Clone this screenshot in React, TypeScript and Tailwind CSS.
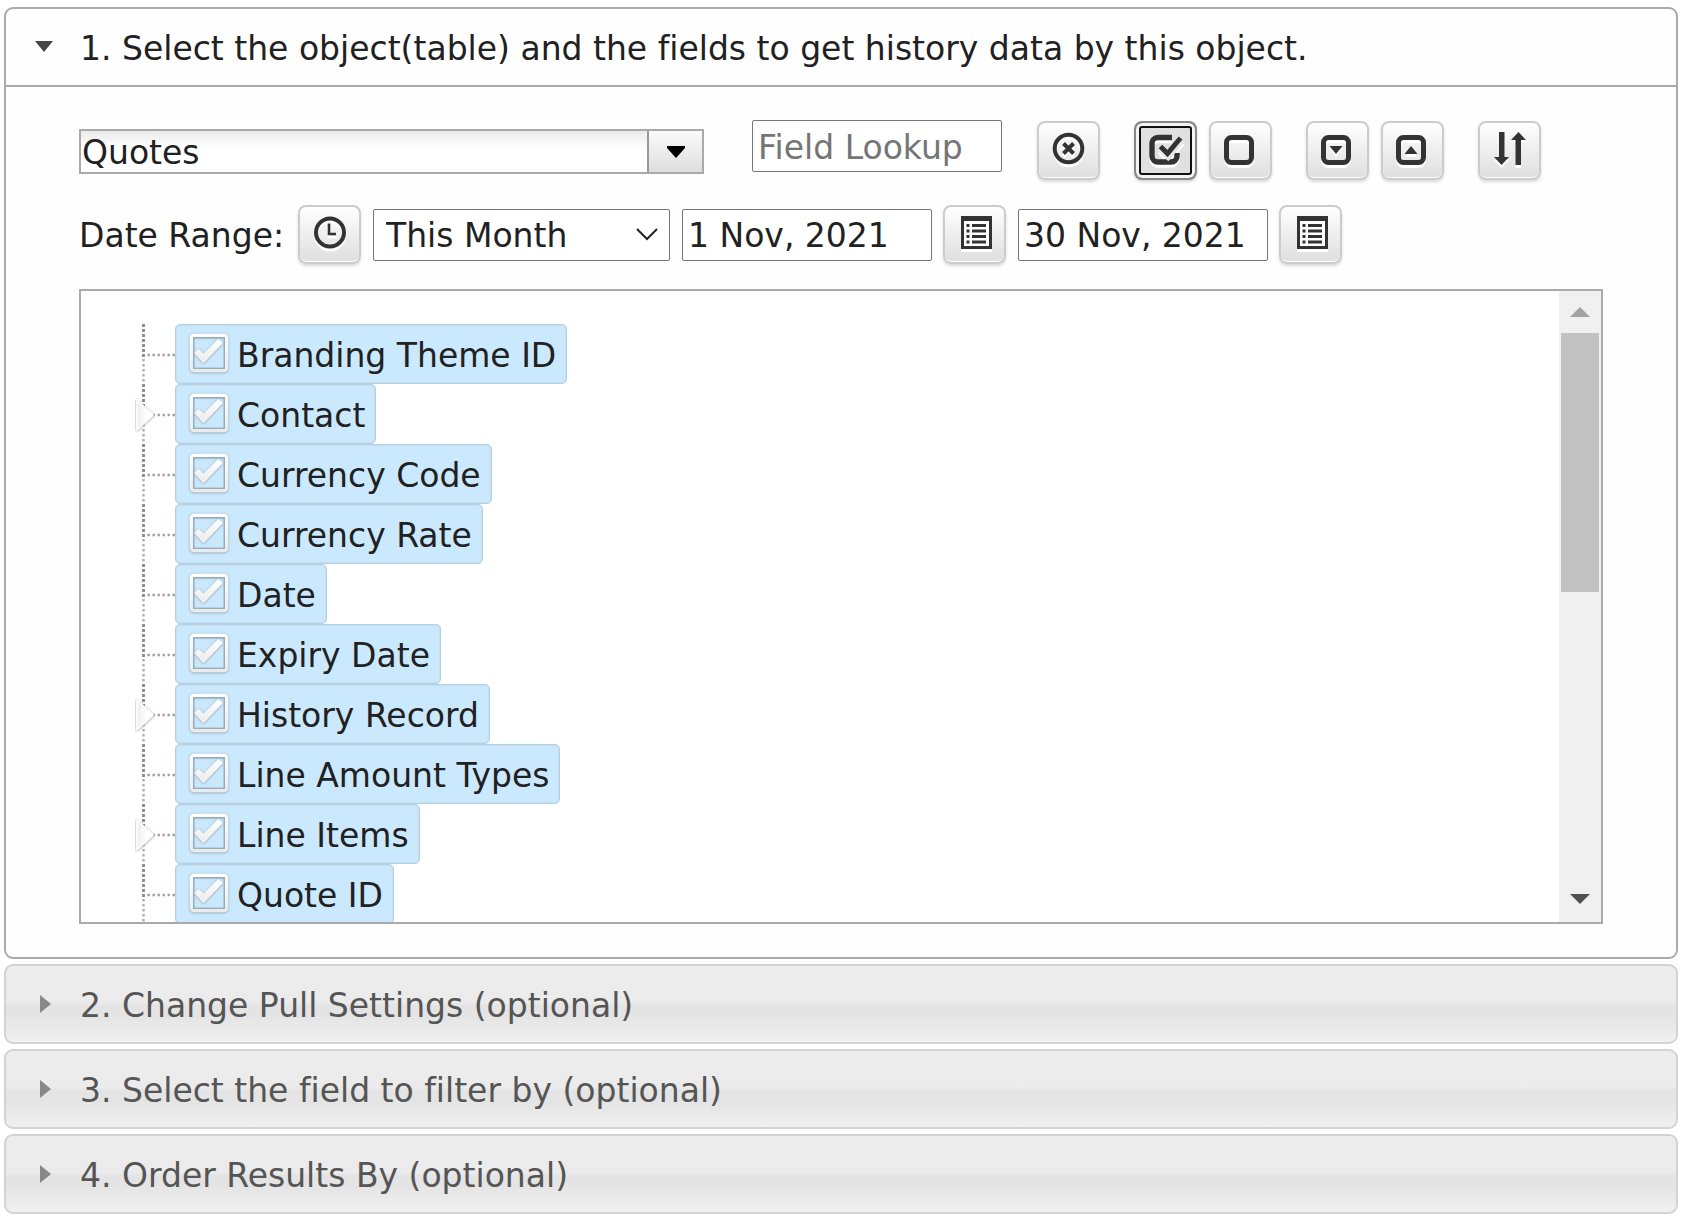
import React, { useState } from "react";

const fields = [
  { name: "Branding Theme ID", expandable: false },
  { name: "Contact", expandable: true },
  { name: "Currency Code", expandable: false },
  { name: "Currency Rate", expandable: false },
  { name: "Date", expandable: false },
  { name: "Expiry Date", expandable: false },
  { name: "History Record", expandable: true },
  { name: "Line Amount Types", expandable: false },
  { name: "Line Items", expandable: true },
  { name: "Quote ID", expandable: false },
];

const sections = [
  "2. Change Pull Settings (optional)",
  "3. Select the field to filter by (optional)",
  "4. Order Results By (optional)",
];

function IconButton({
  label,
  pressed = false,
  children,
}: {
  label: string;
  pressed?: boolean;
  children: React.ReactNode;
}) {
  return (
    <button
      type="button"
      aria-label={label}
      className={
        pressed
          ? "h-[59px] w-[63px] shrink-0 rounded-lg border-2 border-[#888] bg-[#e0e0e0] shadow-[inset_0_0_0_3px_#f4f4f4,inset_0_0_0_5px_#101010,0_2px_3px_rgba(0,0,0,0.15)]"
          : "h-[59px] w-[63px] shrink-0 rounded-lg border-2 border-[#ccc] bg-linear-to-b from-white to-[#dedede] shadow-[inset_0_-1px_0_#fff,0_2px_3px_rgba(0,0,0,0.15)]"
      }
    >
      <svg
        viewBox="2 2 59 55"
        className="block h-[55px] w-[59px] [filter:drop-shadow(0_3px_0_#fff)]"
        fill="none"
        stroke="#333"
        aria-hidden="true"
      >
        {children}
      </svg>
    </button>
  );
}

function CalendarIcon() {
  return (
    <>
      <path d="M18 11h31v33H18z" fill="#333" stroke="none" />
      <path d="M21 16h25v25H21z" fill="#fff" stroke="none" />
      <path d="M29 20.5h14M29 26h14M29 31.5h14M29 37h14" strokeWidth="2.8" />
      <path d="M23.5 20.5h3M23.5 26h3M23.5 31.5h3M23.5 37h3" strokeWidth="2.8" />
    </>
  );
}

function Rail({ expandable }: { expandable: boolean }) {
  return (
    <svg viewBox="0 0 40 60" className="h-[60px] w-10 shrink-0" fill="none" aria-hidden="true">
      <path d="M8.500 0v60" stroke="#b0b0b0" strokeWidth="2.4" strokeDasharray="2.4 2.6" />
      <path d="M8.500 0v34" stroke="#8c8c8c" strokeWidth="2.8" strokeDasharray="3 2" />
      <path d="M12.5 31H40" stroke="#a0a0a0" strokeWidth="2.4" strokeDasharray="2.4 2.6" />
      {expandable && (
        <path
          d="M2 16.500L18 31L2 45.500Z"
          fill="url(#expander)"
          stroke="#fafafa"
          strokeWidth="2"
          strokeLinejoin="round"
          filter="url(#halo)"
        />
      )}
    </svg>
  );
}

function FieldRow({ name, expandable }: { name: string; expandable: boolean }) {
  const [checked, setChecked] = useState(true);
  return (
    <li className="flex">
      <Rail expandable={expandable} />
      <label className="flex h-[60px] items-center gap-2 rounded-[5px] border border-[#b9cedc] bg-[#cbe9fe] pr-[10px] pl-[13px] whitespace-nowrap shadow-[inset_0_0_2px_#b4cfe0]">
        <span className="grid">
          <input
            type="checkbox"
            checked={checked}
            onChange={() => setChecked(!checked)}
            className="size-10 appearance-none [grid-area:1/1]"
          />
          <svg
            viewBox="0 0 40 40"
            className="pointer-events-none size-10 overflow-visible [grid-area:1/1]"
            fill="none"
            aria-hidden="true"
          >
            <rect x="2.500" y="1.500" width="35" height="35" rx="2.500" stroke="url(#boxEdge)" strokeWidth="3.400" filter="url(#halo)" />
            <rect x="4.700" y="3.700" width="30.600" height="30.600" stroke="#8fa9ba" strokeWidth="1.200" />
            {checked && (
              <path
                d="M5.500 19L9.500 15L14.500 20L29.500 5L33.500 9L14.500 29Z"
                fill="url(#boxEdge)"
                stroke="#fff"
                strokeWidth="0.500"
                filter="url(#halo)"
              />
            )}
          </svg>
        </span>
        <span className="pt-[3px]">{name}</span>
      </label>
    </li>
  );
}

export default function App() {
  return (
    <main className="flex flex-col gap-[5px] bg-white pt-[7px] pr-[5px] pb-[5px] pl-1 font-['DejaVu_Sans',Verdana,sans-serif] text-[33px] leading-[40px] text-[#212121] [font-variant-ligatures:none]">
      <svg className="absolute size-0" aria-hidden="true">
        <defs>
          <linearGradient id="expander" x1="0" y1="0" x2="1" y2="0">
            <stop offset="0" stopColor="#ececec" />
            <stop offset="0.6" stopColor="#fff" />
          </linearGradient>
          <linearGradient id="boxEdge" x1="0" y1="0" x2="0" y2="1">
            <stop offset="0" stopColor="#fff" />
            <stop offset="1" stopColor="#ebebeb" />
          </linearGradient>
          <filter id="halo" x="-20%" y="-20%" width="140%" height="140%">
            <feDropShadow dx="0" dy="0.5" stdDeviation="1.1" floodColor="#444" floodOpacity="0.6" />
          </filter>
        </defs>
      </svg>

      <section className="rounded-[9px] border-2 border-[#aaa] bg-[#fefefe]">
        <h2 className="border-b-2 border-[#aaa]">
          <button type="button" aria-expanded="true" className="flex h-[76px] w-full items-center pl-[29px] text-left">
            <svg viewBox="0 0 18 12" className="h-3 w-[18px]" aria-hidden="true">
              <path d="M0 0h18L9 11z" fill="#454545" />
            </svg>
            <span className="pt-[3px] pl-[27px]">
              1. Select the object(table) and the fields to get history data by this object.
            </span>
          </button>
        </h2>

        <div className="flex flex-col gap-[25px] px-[73px] py-[33px]">
          <div className="flex items-start">
            <div className="mt-[9px] flex h-[45px] w-[625px] border-2 border-[#aaa]">
              <input
                aria-label="Object"
                defaultValue="Quotes"
                className="min-w-0 flex-1 bg-linear-to-b from-[#eaeaea] to-white to-40% pt-[2px] pl-px outline-none"
              />
              <button
                type="button"
                aria-label="Show objects"
                className="flex w-[55px] items-center justify-center border-l-2 border-[#999] bg-linear-to-b from-[#fbfbfb] to-[#dedede]"
              >
                <svg viewBox="0 0 18 12" className="h-3 w-[18px]" aria-hidden="true">
                  <path d="M0 0h18v2L9 12L0 2z" fill="#000" />
                </svg>
              </button>
            </div>
            <input
              aria-label="Field Lookup"
              placeholder="Field Lookup"
              className="ml-12 h-[52px] w-[250px] rounded-xs border border-[#767676] bg-white px-[5px] pt-[2px] placeholder:text-[#757575]"
            />
            <div className="mt-px ml-[35px] flex gap-[34px]">
              <IconButton label="Clear lookup">
                <circle cx="31.5" cy="27.5" r="13.8" strokeWidth="4" />
                <path d="M26.5 22.5l10 10M36.5 22.5l-10 10" strokeWidth="4" />
              </IconButton>
              <div className="flex gap-3">
                <IconButton label="Select all" pressed>
                  <path d="M38 16.5H24a6 6 0 0 0-6 6V35a6 6 0 0 0 6 6h13a6 6 0 0 0 6-6v-3" strokeWidth="5.4" />
                  <path d="M27 26.500l7 7L47 18" stroke="#e8e8e8" strokeWidth="9" />
                  <path d="M26.500 25.500l7 7L46.500 17" strokeWidth="5" />
                </IconButton>
                <IconButton label="Deselect all">
                  <rect x="17.500" y="16.500" width="25" height="25" rx="5" strokeWidth="5" />
                </IconButton>
              </div>
              <div className="flex gap-3">
                <IconButton label="Expand all">
                  <rect x="17.500" y="16.500" width="25" height="25" rx="5" strokeWidth="5" />
                  <path d="M23.500 25h13L30 33z" fill="#333" stroke="none" />
                </IconButton>
                <IconButton label="Collapse all">
                  <rect x="17.500" y="16.500" width="25" height="25" rx="5" strokeWidth="5" />
                  <path d="M23.500 33h13L30 25z" fill="#333" stroke="none" />
                </IconButton>
              </div>
              <IconButton label="Sort fields">
                <path
                  d="M21 11h5.500v25H31L23.500 44L16 36h5zM37.500 44V19H33L40.500 11L48 19h-5v25z"
                  fill="#333"
                  stroke="none"
                />
              </IconButton>
            </div>
          </div>

          <div className="flex items-center gap-3">
            <label htmlFor="range" className="min-w-[207px] pt-[3px] whitespace-nowrap">
              Date Range:
            </label>
            <IconButton label="Time">
              <circle cx="32" cy="27.500" r="14" strokeWidth="4" />
              <path d="M31 18.500v10.500h7" strokeWidth="2.600" />
            </IconButton>
            <div className="grid w-[297px]">
              <select
                id="range"
                defaultValue="This Month"
                className="h-[52px] w-full appearance-none rounded-xs border border-[#767676] bg-white pt-[2px] pl-3 [grid-area:1/1]"
              >
                <option>This Month</option>
                <option>Last Month</option>
              </select>
              <svg
                viewBox="0 0 22 13"
                className="pointer-events-none mr-3 h-[13px] w-[22px] self-center justify-self-end [grid-area:1/1]"
                fill="none"
                aria-hidden="true"
              >
                <path d="M1 1l10 10L21 1" stroke="#222" strokeWidth="2" />
              </svg>
            </div>
            <div className="flex items-center gap-[11px]">
              <input
                aria-label="Start date"
                defaultValue="1 Nov, 2021"
                className="h-[52px] w-[250px] rounded-xs border border-[#767676] bg-white px-[5px] pt-[2px]"
              />
              <IconButton label="Pick start date">
                <CalendarIcon />
              </IconButton>
            </div>
            <div className="flex items-center gap-[11px]">
              <input
                aria-label="End date"
                defaultValue="30 Nov, 2021"
                className="h-[52px] w-[250px] rounded-xs border border-[#767676] bg-white px-[5px] pt-[2px]"
              />
              <IconButton label="Pick end date">
                <CalendarIcon />
              </IconButton>
            </div>
          </div>

          <div className="flex h-[635px] border-2 border-[#aaa] bg-white">
            <ul className="flex-1 overflow-hidden pt-[33px] pl-[54px]">
              {fields.map((f) => (
                <FieldRow key={f.name} name={f.name} expandable={f.expandable} />
              ))}
            </ul>
            <div className="flex w-[42px] flex-col bg-[#f0f0f0]">
              <button type="button" aria-label="Scroll up" className="flex h-[42px] items-center justify-center">
                <svg viewBox="0 0 20 10" className="h-[10px] w-5" aria-hidden="true">
                  <path d="M10 0l10 10H0z" fill="#a3a3a3" />
                </svg>
              </button>
              <div className="flex-1 px-[2px]">
                <div className="h-[259px] bg-[#c1c1c1]" />
              </div>
              <button type="button" aria-label="Scroll down" className="flex h-[46px] items-center justify-center">
                <svg viewBox="0 0 20 10" className="h-[10px] w-5" aria-hidden="true">
                  <path d="M0 0h20L10 10z" fill="#505050" />
                </svg>
              </button>
            </div>
          </div>
        </div>
      </section>

      {sections.map((title) => (
        <h2 key={title}>
          <button
            type="button"
            aria-expanded="false"
            className="flex h-20 w-full items-center rounded-[9px] border-2 border-[#d3d3d3] bg-[linear-gradient(#ededed_0%,#ebebeb_48%,#e4e4e4_52%,#e4e4e4_65%,#f0f0f0_100%)] pl-[34px] text-left text-[#555]"
          >
            <svg viewBox="0 0 11 18" className="h-[18px] w-[11px]" aria-hidden="true">
              <path d="M0 0l11 9L0 18z" fill="#888" />
            </svg>
            <span className="pt-[3px] pl-[29px]">{title}</span>
          </button>
        </h2>
      ))}
    </main>
  );
}
